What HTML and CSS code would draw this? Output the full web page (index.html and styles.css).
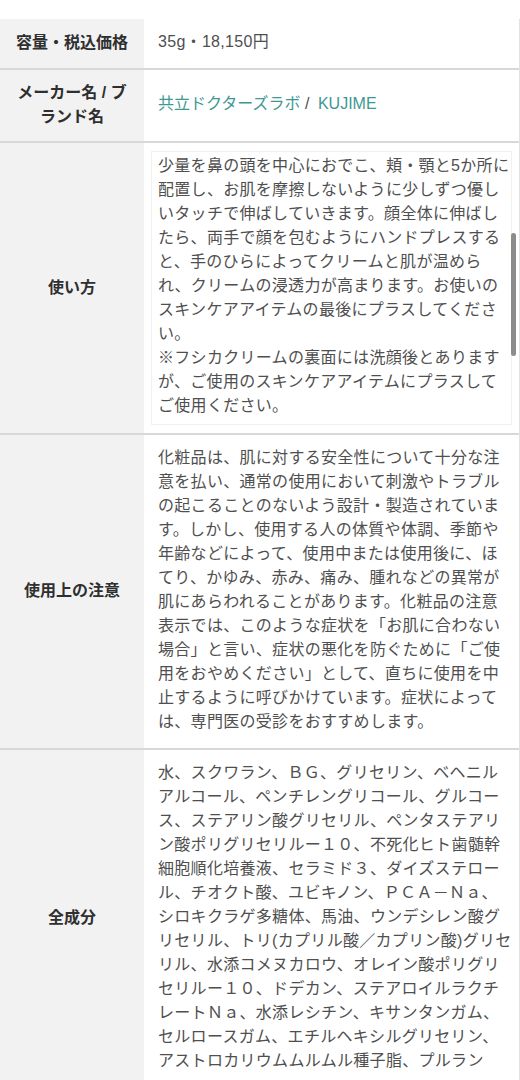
FILE: index.html
```html
<!DOCTYPE html>
<html lang="ja">
<head>
<meta charset="utf-8">
<title>商品仕様</title>
<link rel="stylesheet" href="styles.css">
</head>
<body>
<div class="spec">
  <div class="spec-row">
    <div class="spec-head">容量・税込価格</div>
    <div class="spec-body">35g・18,150円</div>
  </div>
  <div class="spec-row">
    <div class="spec-head">メーカー名 / ブランド名</div>
    <div class="spec-body spec-body--middle"><span><a class="link" href="#">共立ドクターズラボ</a> / <a class="link link--brand" href="#">KUJIME</a></span></div>
  </div>
  <div class="spec-row">
    <div class="spec-head">使い方</div>
    <div class="spec-body spec-body--scroll">
      <div class="scroll-box">
        <p>少量を鼻の頭を中心におでこ、頬・顎と5か所に配置し、お肌を摩擦しないように少しずつ優しいタッチで伸ばしていきます。顔全体に伸ばしたら、両手で顔を包むようにハンドプレスすると、手のひらによってクリームと肌が温められ、クリームの浸透力が高まります。お使いのスキンケアアイテムの最後にプラスしてください。</p>
        <p>※フシカクリームの裏面には洗顔後とありますが、ご使用のスキンケアアイテムにプラスしてご使用ください。</p>
      </div>
      <span class="scroll-thumb"></span>
    </div>
  </div>
  <div class="spec-row">
    <div class="spec-head">使用上の注意</div>
    <div class="spec-body">化粧品は、肌に対する安全性について十分な注意を払い、通常の使用において刺激やトラブルの起こることのないよう設計・製造されています。しかし、使用する人の体質や体調、季節や年齢などによって、使用中または使用後に、ほてり、かゆみ、赤み、痛み、腫れなどの異常が肌にあらわれることがあります。化粧品の注意表示では、このような症状を「お肌に合わない場合」と言い、症状の悪化を防ぐために「ご使用をおやめください」として、直ちに使用を中止するように呼びかけています。症状によっては、専門医の受診をおすすめします。</div>
  </div>
  <div class="spec-row">
    <div class="spec-head">全成分</div>
    <div class="spec-body">水、スクワラン、ＢＧ、グリセリン、ベヘニルアルコール、ペンチレングリコール、グルコース、ステアリン酸グリセリル、ペンタステアリン酸ポリグリセリルー１０、不死化ヒト歯髄幹細胞順化培養液、セラミド３、ダイズステロール、チオクト酸、ユビキノン、ＰＣＡ－Ｎａ、シロキクラゲ多糖体、馬油、ウンデシレン酸グリセリル、トリ(カプリル酸／カプリン酸)グリセリル、水添コメヌカロウ、オレイン酸ポリグリセリルー１０、ドデカン、ステアロイルラクチレートＮａ、水添レシチン、キサンタンガム、セルロースガム、エチルヘキシルグリセリン、アストロカリウムムルムル種子脂、プルラン</div>
  </div>
</div>
</body>
</html>
```
FILE: styles.css
```css
html, body {
  margin: 0;
  padding: 0;
  background: #ffffff;
}

body {
  padding-top: 19px;
  font-family: "Liberation Sans", "Noto Sans CJK JP", sans-serif;
  font-size: 16px;
  line-height: 24px;
  color: #4f4f4f;
}

.spec {
  border-right: 1px solid #e2e2e2;
}

.spec-row {
  display: grid;
  grid-template-columns: 144px 1fr;
  border-bottom: 2px solid #d8d8d8;
}

.spec-head {
  background: #f2f2f2;
  display: flex;
  align-items: center;
  justify-content: center;
  text-align: center;
  padding: 11px 12px 12px;
  font-weight: bold;
  color: #2f2f2f;
}

.spec-body {
  padding: 11px 5px 14px 14px;
  letter-spacing: 0.3px;
}

.spec-body--middle {
  display: flex;
  align-items: center;
  letter-spacing: 0;
}

.link {
  color: #3e9893;
  text-decoration: none;
}

.link--brand {
  margin-left: 4px;
}

.spec-body--scroll {
  position: relative;
  padding: 8px 7px 8px 7px;
}

.scroll-box {
  border: 1px solid #f1f1f1;
  padding: 2px 0 6px 6px;
}

.scroll-box p {
  margin: 0;
}

.scroll-thumb {
  position: absolute;
  top: 90px;
  right: 3px;
  width: 5px;
  height: 123px;
  border-radius: 3px;
  background: #8c8c8c;
}
```
